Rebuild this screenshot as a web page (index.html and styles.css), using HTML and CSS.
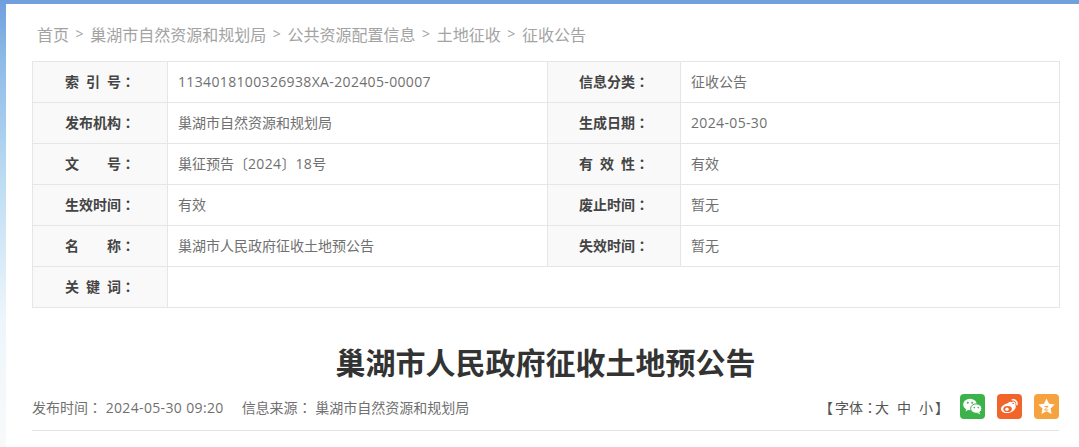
FILE: index.html
```html
<!DOCTYPE html>
<html lang="zh-CN">
<head>
<meta charset="utf-8">
<title>巢湖市人民政府征收土地预公告</title>
<link rel="stylesheet" href="styles.css">
</head>
<body>
<main class="page">
  <nav class="crumbs">
    <a>首页</a><span class="sep">&gt;</span><a>巢湖市自然资源和规划局</a><span class="sep">&gt;</span><a>公共资源配置信息</a><span class="sep">&gt;</span><a>土地征收</a><span class="sep">&gt;</span><a>征收公告</a>
  </nav>
  <table class="info">
    <colgroup><col class="c1"><col class="c2"><col class="c3"><col class="c4"></colgroup>
    <tr><th>索 引 号<span class="colon" lang="zh-TW">：</span></th><td><span class="num">1134018100326938XA-202405-00007</span></td><th class="right">信息分类<span class="colon" lang="zh-TW">：</span></th><td>征收公告</td></tr>
    <tr><th>发布机构<span class="colon" lang="zh-TW">：</span></th><td>巢湖市自然资源和规划局</td><th class="right">生成日期<span class="colon" lang="zh-TW">：</span></th><td><span class="num">2024-05-30</span></td></tr>
    <tr><th>文&emsp;&emsp;号<span class="colon" lang="zh-TW">：</span></th><td>巢征预告〔<span class="num">2024</span>〕<span class="num">18</span>号</td><th class="right">有 效 性<span class="colon" lang="zh-TW">：</span></th><td>有效</td></tr>
    <tr><th>生效时间<span class="colon" lang="zh-TW">：</span></th><td>有效</td><th class="right">废止时间<span class="colon" lang="zh-TW">：</span></th><td>暂无</td></tr>
    <tr><th>名&emsp;&emsp;称<span class="colon" lang="zh-TW">：</span></th><td>巢湖市人民政府征收土地预公告</td><th class="right">失效时间<span class="colon" lang="zh-TW">：</span></th><td>暂无</td></tr>
    <tr><th>关 键 词<span class="colon" lang="zh-TW">：</span></th><td colspan="3"></td></tr>
  </table>
  <h1 class="title">巢湖市人民政府征收土地预公告</h1>
  <div class="meta">
    <div class="source">
      <span>发布时间<span class="colon" lang="zh-TW">：</span> <span class="num">2024-05-30 09:20</span></span>
      <span>信息来源<span class="colon" lang="zh-TW">：</span> 巢湖市自然资源和规划局</span>
    </div>
    <div class="tools">
      <span class="font-size"><span class="colon open" lang="zh-TW">【</span>字体<span class="colon tight" lang="zh-TW">：</span>大&nbsp;&nbsp;中&nbsp;&nbsp;小<span class="colon shut" lang="zh-TW">】</span></span>
      <span class="share wechat">
        <svg viewBox="0 0 25 25" width="25" height="25"><ellipse cx="10" cy="10.500" rx="6.800" ry="5.800" fill="#fff"/><path d="M6.500 14.500l-1 3 3.400-2z" fill="#fff"/><ellipse cx="16.200" cy="14.600" rx="5.600" ry="4.700" fill="#fff" stroke="#3cb34a" stroke-width="1"/><path d="M19 18l1.400 2.400-3.400-1.600z" fill="#fff"/><circle cx="7.800" cy="8.800" r="1" fill="#3cb34a"/><circle cx="12.200" cy="8.800" r="1" fill="#3cb34a"/><circle cx="14.300" cy="13.600" r=".8" fill="#3cb34a"/><circle cx="18.200" cy="13.600" r=".8" fill="#3cb34a"/></svg>
      </span>
      <span class="share weibo">
        <svg viewBox="0 0 25 25" width="25" height="25"><path d="M10.600 9.200c2.600-2 5-1.800 5 .8 1.900-.2 3.600 1 3.200 3.100-.6 3.300-4.400 6-8.500 6-3.300 0-6.300-1.500-6.300-4.200 0-2.100 2.500-4.700 6.600-5.700z" fill="#fff"/><ellipse cx="10.600" cy="15" rx="4.300" ry="3.100" fill="#f2652a"/><circle cx="10" cy="15.200" r="1.700" fill="#fff"/><path d="M15.400 5.800c2.800-.5 5.200 2 4.500 4.800M15.800 8.200c1.300-.2 2.300 1 2 2.200" fill="none" stroke="#fff" stroke-width="1.500" stroke-linecap="round"/></svg>
      </span>
      <span class="share star">
        <svg viewBox="0 0 25 25" width="25" height="25"><path d="M12.500 4.500l2.500 5.300 5.700.7-4.200 3.900 1.100 5.700-5.100-2.800-5.100 2.800 1.100-5.700-4.200-3.900 5.700-.7z" fill="#fff"/><path d="M10.500 12.500h3.500l-3.500 3.500h3.800" fill="none" stroke="#f6a23e" stroke-width="1"/></svg>
      </span>
    </div>
  </div>
</main>
</body>
</html>
```
FILE: styles.css
```css
* { box-sizing: border-box; }
html, body { height: 100%; }
body {
  margin: 0;
  overflow: hidden;
  padding: 4px 0 0 6px;
  background: linear-gradient(180deg, #6f9fdc 0, #8dbbe8 60px, #bcdcf3 180px, #eef6fb 320px, #f9f9f9 447px);
  font-family: "Open Sans", "Noto Sans CJK SC", "Liberation Sans", sans-serif;
  color: #707070;
}
.page {
  background: #fff;
  height: 100%;
  padding: 17px 20px 0 26px;
}
.crumbs {
  display: flex;
  align-items: center;
  height: 25px;
  margin-left: 5px;
  font-size: 16px;
  color: #a3a3a3;
}
.sep { margin: 0 6.6px; font-size: 14px; }
.info {
  width: 1027px;
  margin-top: 15px;
  border-collapse: collapse;
  table-layout: fixed;
  font-size: 14px;
}
.c1 { width: 135px; }
.c2 { width: 380px; }
.c3 { width: 133px; }
.c4 { width: 379px; }
.info tr { height: 41px; }
.info th, .info td { border: 1px solid #e6e6e6; padding: 0 0 2px; }
.info th {
  padding-left: 32px;
  background: #f9f9f9;
  color: #444;
  font-weight: 700;
  text-align: left;
  word-spacing: 3.4px;
}
.info th.right { padding-left: 31px; }
.info td { padding-left: 10px; color: #707070; }
.num { letter-spacing: .35px; }
.colon { font-family: "Noto Sans CJK TC", sans-serif; }
.title {
  margin: 35px 0 0;
  height: 40px;
  line-height: 40px;
  text-align: center;
  font-size: 30px;
  font-weight: 700;
  color: #333;
}
.meta {
  display: flex;
  justify-content: space-between;
  align-items: center;
  width: 1027px;
  height: 48px;
  border-bottom: 1px solid #e3e3e3;
  font-size: 14px;
}
.source { display: flex; gap: 18px; }
.tools { display: flex; align-items: center; }
.font-size { margin-right: 11px; color: #555; word-spacing: .35px; }
.open { margin-right: 2px; }
.tight { margin-right: -2px; }
.shut { margin-left: 2px; }
.share {
  display: flex;
  width: 25px;
  height: 25px;
  margin-left: 12px;
  border-radius: 4px;
}
.font-size + .share { margin-left: 0; }
.wechat { background: #3cb34a; }
.weibo { background: #f2652a; }
.star { background: #f6a23e; }
```
